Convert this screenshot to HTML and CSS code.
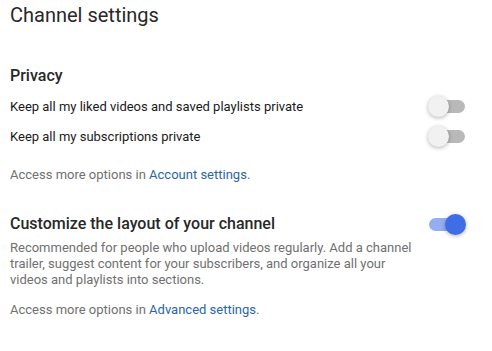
FILE: index.html
```html
<!DOCTYPE html>
<html lang="en">
<head>
    <meta charset="UTF-8">
    <title>Channel settings</title>
    <link rel="stylesheet" href="styles.css">
</head>
<body>
    <div class="page">
        <h1 class="title">Channel settings</h1>

        <section class="section">
            <h2 class="section-title privacy">Privacy</h2>
            <div class="row">
                <span class="row-label">Keep all my liked videos and saved playlists private</span>
                <span class="toggle"><span class="thumb"></span></span>
            </div>
            <div class="row">
                <span class="row-label">Keep all my subscriptions private</span>
                <span class="toggle"><span class="thumb"></span></span>
            </div>
            <p class="note">Access more options in <a href="#">Account settings</a>.</p>
        </section>

        <section class="section layout">
            <div class="row top">
                <div class="row-text">
                    <h2 class="section-title">Customize the layout of your channel</h2>
                    <p class="desc">Recommended for people who upload videos regularly. Add a channel trailer, suggest content for your subscribers, and organize all your videos and playlists into sections.</p>
                </div>
                <span class="toggle on"><span class="thumb"></span></span>
            </div>
            <p class="note">Access more options in <a href="#">Advanced settings</a>.</p>
        </section>
    </div>
</body>
</html>
```

FILE: styles.css
```css
body {
    margin: 0;
    background: #ffffff;
    font-family: Roboto, "Noto Sans", sans-serif;
    color: #0f0f0f;
}

.page {
    padding: 1px 27px 0 10px;
}

.title {
    font-size: 20px;
    font-weight: 400;
    color: #282828;
    margin: 0 0 36px 0;
    line-height: 28px;
}

.section-title {
    font-size: 16px;
    font-weight: 500;
    color: #282828;
    margin: 0;
    line-height: 22px;
}

.section-title.privacy {
    margin-bottom: 4px;
}

.row {
    display: flex;
    justify-content: space-between;
    align-items: center;
    height: 30px;
}

.row-label {
    font-size: 13px;
    color: #1a1a1a;
}

.row.top {
    height: auto;
    align-items: flex-start;
}

.row-text {
    width: 415px;
}

.desc {
    font-size: 13px;
    line-height: 16px;
    color: #707070;
    margin: 5px 0 0 0;
}

.note {
    font-size: 13px;
    line-height: 15px;
    color: #707070;
    margin: 16px 0 0 0;
}

.layout .note {
    margin-top: 14px;
}

.note a {
    color: #2a65a8;
    text-decoration: none;
}

.section.layout {
    margin-top: 31px;
}

/* toggle switch */
.toggle {
    position: relative;
    width: 36px;
    height: 13px;
    border-radius: 7px;
    background: #b9b9b9;
    flex-shrink: 0;
}

.thumb {
    position: absolute;
    left: -1px;
    top: -4px;
    width: 21px;
    height: 21px;
    border-radius: 50%;
    background: #f1f1f1;
    box-shadow: 0 1px 4px rgba(0, 0, 0, 0.3);
}

.toggle.on {
    background: #94aef2;
    margin-top: 5px;
}

.toggle.on .thumb {
    left: auto;
    right: -1px;
    background: #3f6de6;
}
```
